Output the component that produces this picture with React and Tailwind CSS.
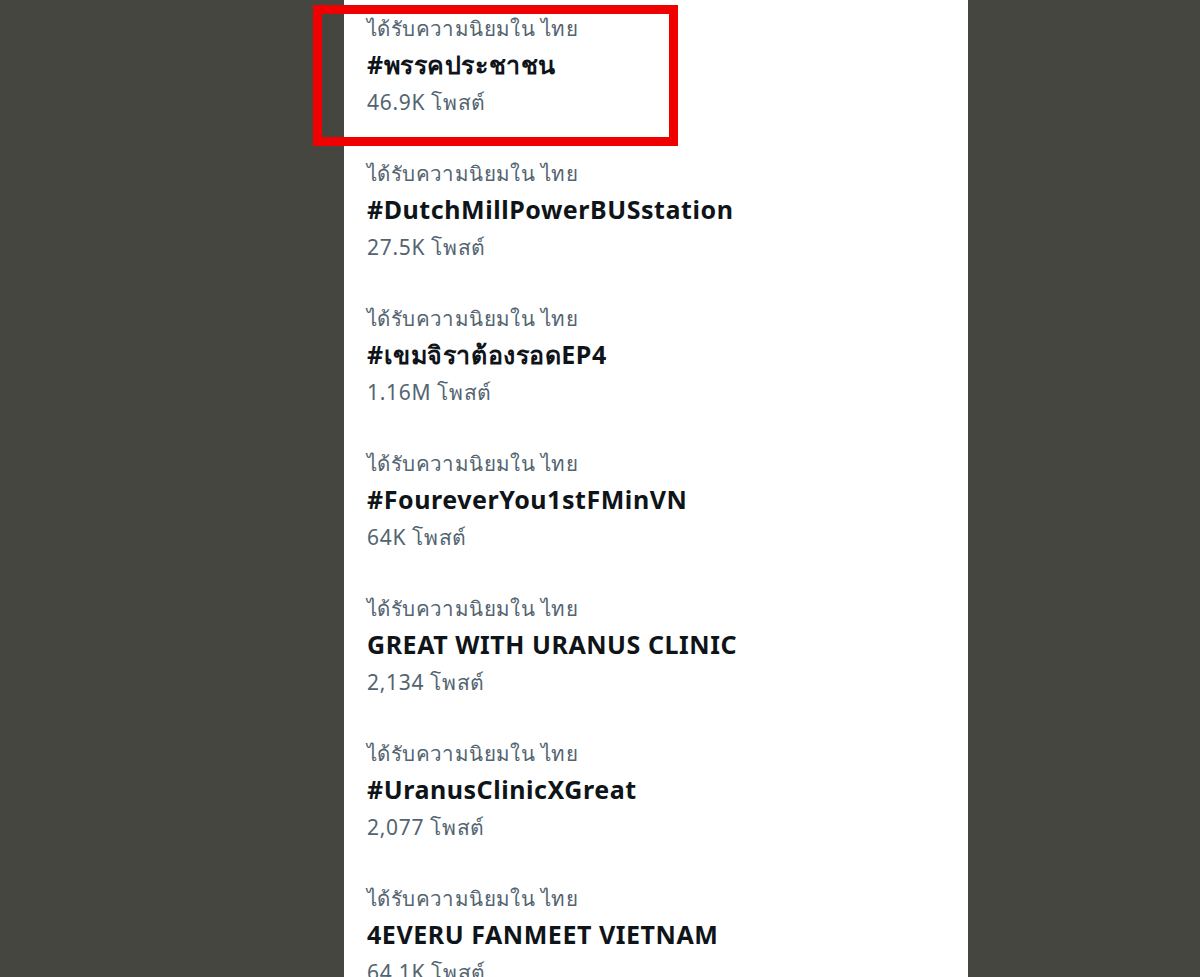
const TRENDS = [
  { title: '#พรรคประชาชน', count: '46.9K โพสต์' },
  { title: '#DutchMillPowerBUSstation', count: '27.5K โพสต์' },
  { title: '#เขมจิราต้องรอดEP4', count: '1.16M โพสต์' },
  { title: '#FoureverYou1stFMinVN', count: '64K โพสต์' },
  { title: 'GREAT WITH URANUS CLINIC', count: '2,134 โพสต์' },
  { title: '#UranusClinicXGreat', count: '2,077 โพสต์' },
  { title: '4EVERU FANMEET VIETNAM', count: '64.1K โพสต์' },
]

export default function App() {
  return (
    <div className="relative w-[1200px] h-[977px] overflow-hidden bg-[#464641] flex justify-center" style={{ fontFamily: '"Noto Sans", "Liberation Sans", sans-serif' }}>
      <div className="w-[624px] h-full bg-white pl-[23px] ml-[112px]">
        {TRENDS.map((t, i) => (
          <div key={i} className="h-[145px] pt-[18px]">
            <div className="text-[20.5px] leading-[20px] text-[#536471] tracking-[0.4px]">ได้รับความนิยมใน ไทย</div>
            <div className="mt-[11px] text-[25px] leading-[30px] font-bold text-[#0f1419] tracking-[0.55px]">{t.title}</div>
            <div className="mt-[13px] text-[21px] leading-[20px] text-[#536471] tracking-[0.7px]">{t.count}</div>
          </div>
        ))}
      </div>

      {/* highlight */}
      <div className="absolute left-[313px] top-[5px] w-[365px] h-[141px] border-[9px] border-[#f00000]" />
    </div>
  )
}
